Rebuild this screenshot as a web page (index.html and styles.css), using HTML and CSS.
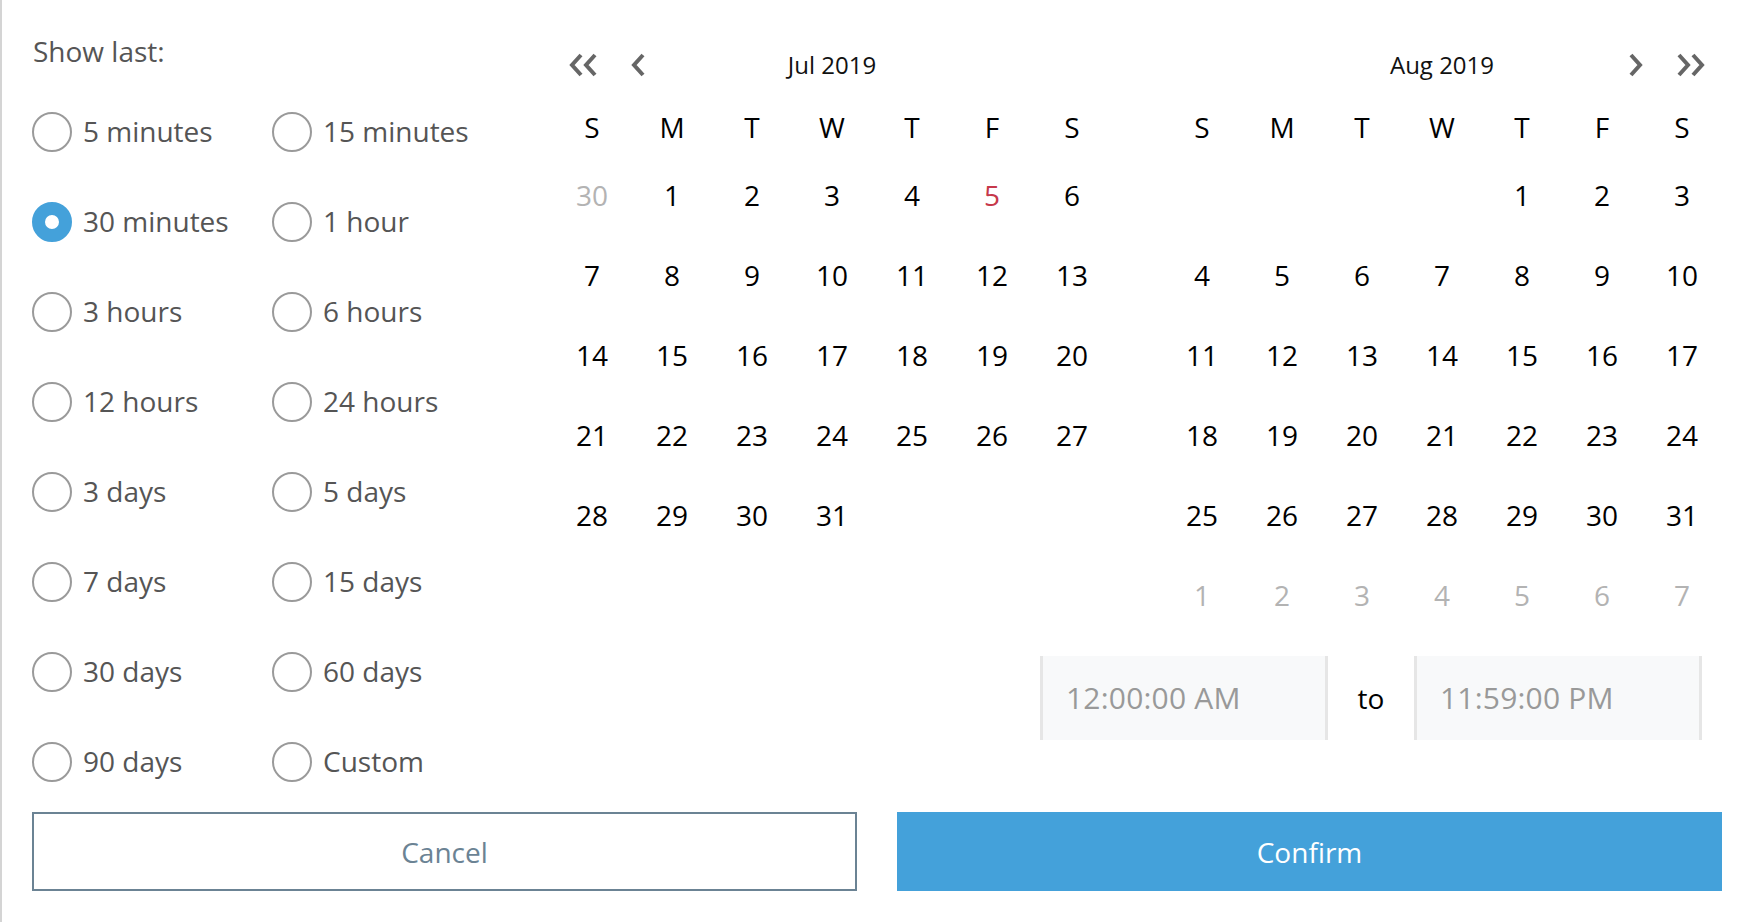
FILE: index.html
```html
<!DOCTYPE html>
<html lang="en">
<head>
<meta charset="utf-8">
<title>Date range picker</title>
<link rel="stylesheet" href="styles.css">
</head>
<body>
<div class="picker">
  <div class="main">
    <div class="presets">
      <div class="presets-title">Show last:</div>
      <div class="preset-grid">
        <div class="preset"><span class="radio"></span><span>5 minutes</span></div>
        <div class="preset"><span class="radio"></span><span>15 minutes</span></div>
        <div class="preset"><span class="radio checked"></span><span>30 minutes</span></div>
        <div class="preset"><span class="radio"></span><span>1 hour</span></div>
        <div class="preset"><span class="radio"></span><span>3 hours</span></div>
        <div class="preset"><span class="radio"></span><span>6 hours</span></div>
        <div class="preset"><span class="radio"></span><span>12 hours</span></div>
        <div class="preset"><span class="radio"></span><span>24 hours</span></div>
        <div class="preset"><span class="radio"></span><span>3 days</span></div>
        <div class="preset"><span class="radio"></span><span>5 days</span></div>
        <div class="preset"><span class="radio"></span><span>7 days</span></div>
        <div class="preset"><span class="radio"></span><span>15 days</span></div>
        <div class="preset"><span class="radio"></span><span>30 days</span></div>
        <div class="preset"><span class="radio"></span><span>60 days</span></div>
        <div class="preset"><span class="radio"></span><span>90 days</span></div>
        <div class="preset"><span class="radio"></span><span>Custom</span></div>
      </div>
    </div>
    <div class="calendars">
      <div class="months">
        <div class="month">
          <div class="month-head">
            <div class="nav nav-left">
              <svg class="icon dbl" width="30" height="24" viewBox="0 0 30 24"><path d="M13 2 L4 12 L13 22 M27 2 L18 12 L27 22" fill="none" stroke="#666" stroke-width="4"/></svg>
              <svg class="icon sgl" width="16" height="24" viewBox="0 0 16 24"><path d="M13 2 L4 12 L13 22" fill="none" stroke="#666" stroke-width="4"/></svg>
            </div>
            <div class="title">Jul 2019</div>
            <div class="nav"></div>
          </div>
          <div class="weekdays"><span>S</span><span>M</span><span>T</span><span>W</span><span>T</span><span>F</span><span>S</span></div>
          <div class="days">
            <span class="muted">30</span><span>1</span><span>2</span><span>3</span><span>4</span><span class="today">5</span><span>6</span>
            <span>7</span><span>8</span><span>9</span><span>10</span><span>11</span><span>12</span><span>13</span>
            <span>14</span><span>15</span><span>16</span><span>17</span><span>18</span><span>19</span><span>20</span>
            <span>21</span><span>22</span><span>23</span><span>24</span><span>25</span><span>26</span><span>27</span>
            <span>28</span><span>29</span><span>30</span><span>31</span><span></span><span></span><span></span>
            <span></span><span></span><span></span><span></span><span></span><span></span><span></span>
          </div>
        </div>
        <div class="month">
          <div class="month-head">
            <div class="nav"></div>
            <div class="title">Aug 2019</div>
            <div class="nav nav-right">
              <svg class="icon sgl" width="16" height="24" viewBox="0 0 16 24"><path d="M3 2 L12 12 L3 22" fill="none" stroke="#666" stroke-width="4"/></svg>
              <svg class="icon dbl" width="30" height="24" viewBox="0 0 30 24"><path d="M3 2 L12 12 L3 22 M17 2 L26 12 L17 22" fill="none" stroke="#666" stroke-width="4"/></svg>
            </div>
          </div>
          <div class="weekdays"><span>S</span><span>M</span><span>T</span><span>W</span><span>T</span><span>F</span><span>S</span></div>
          <div class="days">
            <span></span><span></span><span></span><span></span><span>1</span><span>2</span><span>3</span>
            <span>4</span><span>5</span><span>6</span><span>7</span><span>8</span><span>9</span><span>10</span>
            <span>11</span><span>12</span><span>13</span><span>14</span><span>15</span><span>16</span><span>17</span>
            <span>18</span><span>19</span><span>20</span><span>21</span><span>22</span><span>23</span><span>24</span>
            <span>25</span><span>26</span><span>27</span><span>28</span><span>29</span><span>30</span><span>31</span>
            <span class="muted">1</span><span class="muted">2</span><span class="muted">3</span><span class="muted">4</span><span class="muted">5</span><span class="muted">6</span><span class="muted">7</span>
          </div>
        </div>
      </div>
      <div class="time-row">
        <div class="time-input">12:00:00 AM</div>
        <div class="to">to</div>
        <div class="time-input">11:59:00 PM</div>
      </div>
    </div>
  </div>
  <div class="actions">
    <div class="btn btn-cancel">Cancel</div>
    <div class="btn btn-confirm">Confirm</div>
  </div>
</div>
</body>
</html>
```

FILE: styles.css
```css
html, body {
  margin: 0;
  padding: 0;
  background: #ffffff;
}

body {
  font-family: "Open Sans", "Noto Sans", sans-serif;
}

.picker {
  box-sizing: border-box;
  height: 922px;
  border-left: 2px solid #d4d4d4;
  padding: 31px 30px 0 30px;
}

.main {
  display: flex;
}

.presets {
  width: 520px;
  flex: none;
}

.presets-title {
  font-size: 28px;
  line-height: 40px;
  color: #555555;
  padding-left: 1px;
}

.preset-grid {
  margin-top: 15px;
  display: grid;
  grid-template-columns: 240px 240px;
  grid-auto-rows: 90px;
}

.preset {
  display: flex;
  align-items: center;
  font-size: 28px;
  color: #555555;
}

.radio {
  box-sizing: border-box;
  width: 40px;
  height: 40px;
  border: 2px solid #9a9a9a;
  border-radius: 50%;
  margin-right: 11px;
  flex: none;
  background: #ffffff;
  position: relative;
  top: 1px;
}

.radio.checked {
  border: 13px solid #44a1da;
}

.calendars {
  width: 1170px;
  flex: none;
  margin-top: 8px;
}

.months {
  display: flex;
  gap: 50px;
}

.month {
  width: 560px;
}

.month-head {
  display: grid;
  grid-template-columns: 1fr auto 1fr;
  align-items: center;
  height: 50px;
}

.title {
  font-size: 24px;
  color: #111111;
}

.nav {
  display: flex;
  align-items: center;
}

.nav-left {
  padding-left: 16px;
  gap: 32px;
}

.nav-right {
  justify-content: flex-end;
  padding-right: 16px;
  gap: 32px;
}

.icon {
  display: block;
  position: relative;
  top: 1px;
}

.weekdays {
  margin-top: 18px;
  display: grid;
  grid-template-columns: repeat(7, 80px);
  height: 40px;
  line-height: 40px;
  font-size: 28px;
  color: #000000;
  text-align: center;
}

.days {
  margin-top: 8px;
  display: grid;
  grid-template-columns: repeat(7, 80px);
  grid-auto-rows: 80px;
  font-size: 28px;
  color: #000000;
}

.days span {
  display: flex;
  align-items: center;
  justify-content: center;
}

.days .muted {
  color: #b3b3b3;
}

.days .today {
  color: #c6384b;
}

.time-row {
  margin-top: 21px;
  display: flex;
  justify-content: flex-end;
  padding-right: 20px;
  height: 84px;
}

.time-input {
  box-sizing: border-box;
  width: 288px;
  display: flex;
  align-items: center;
  padding-left: 23px;
  padding-bottom: 2px;
  background: #f8f9fa;
  border-left: 3px solid #e6e6e6;
  border-right: 3px solid #e6e6e6;
  font-size: 30px;
  letter-spacing: 0.2px;
  color: #999999;
}

.to {
  width: 86px;
  display: flex;
  align-items: center;
  justify-content: center;
  padding-bottom: 1px;
  font-size: 28px;
  color: #000000;
}

.actions {
  margin-top: 6px;
  display: grid;
  grid-template-columns: 1fr 1fr;
  gap: 40px;
}

.btn {
  box-sizing: border-box;
  height: 79px;
  display: flex;
  align-items: center;
  justify-content: center;
  font-size: 28px;
}

.btn-cancel {
  border: 2px solid #6b8394;
  color: #6b8394;
  background: #ffffff;
}

.btn-confirm {
  background: #44a1da;
  color: #ffffff;
}
```
